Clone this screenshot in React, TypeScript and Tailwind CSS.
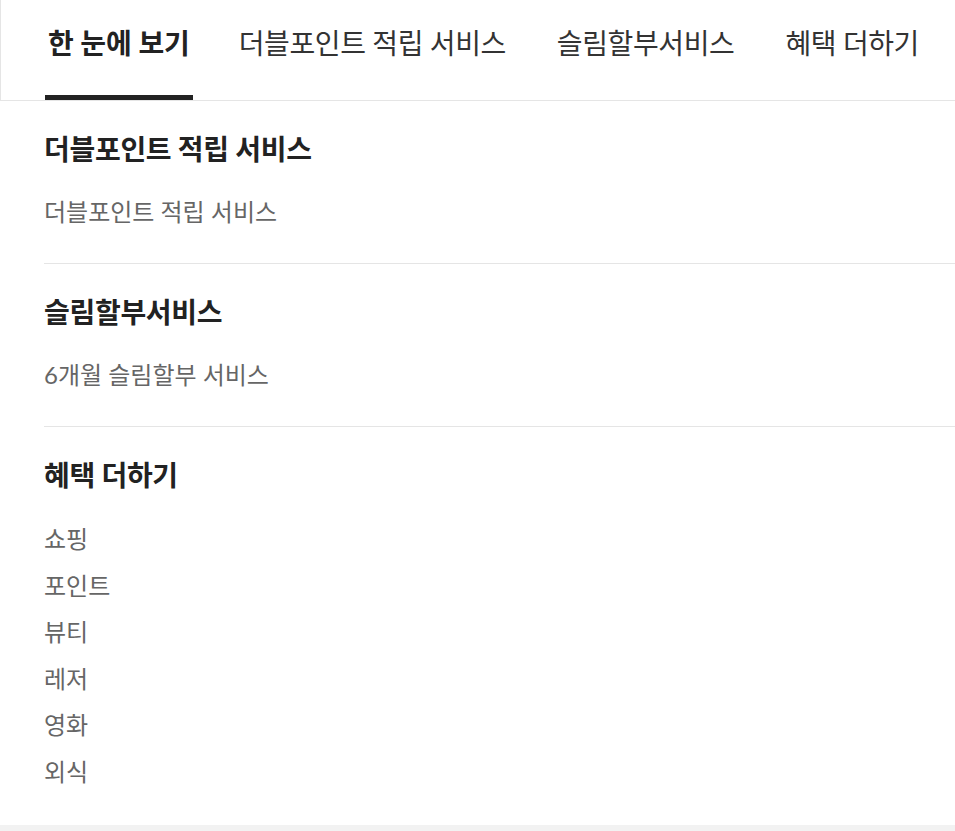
import React from "react";

const font = { fontFamily: 'Lato, "Noto Sans CJK KR", sans-serif' };

const tabs = ["한 눈에 보기", "더블포인트 적립 서비스", "슬림할부서비스", "혜택 더하기"];

export default function App() {
  return (
    <div className="w-full overflow-hidden bg-white" style={font}>
      <nav className="flex h-[101px] items-stretch gap-[45px] border-b border-l border-[#e5e5e5] pl-[44px]">
        {tabs.map((t, i) => (
          <div
            key={t}
            className={
              i === 0
                ? "-mr-[2px] flex shrink-0 items-center whitespace-nowrap border-b-[5px] border-[#222] px-[3px] pb-[9px] text-[28px] font-bold tracking-[-0.1px] text-[#222]"
                : "flex shrink-0 items-center whitespace-nowrap border-b-[5px] border-transparent px-[3px] pb-[9px] text-[28px] tracking-[-0.4px] text-[#333]"
            }
          >
            {t}
          </div>
        ))}
      </nav>
      <div className="pl-[44px]">
        <section className="border-b border-[#e5e5e5] pt-[30px] pb-[35px]">
          <h2 className="text-[28px] font-bold leading-[36px] tracking-[-0.3px] text-[#222]">더블포인트 적립 서비스</h2>
          <p className="mt-[29px] text-[24px] leading-[32px] text-[#666]">더블포인트 적립 서비스</p>
        </section>
        <section className="border-b border-[#e5e5e5] pt-[30px] pb-[35px]">
          <h2 className="text-[28px] font-bold leading-[36px] tracking-[-0.3px] text-[#222]">슬림할부서비스</h2>
          <p className="mt-[29px] text-[24px] leading-[32px] text-[#666]">6개월 슬림할부 서비스</p>
        </section>
        <section className="pt-[30px] pb-[29px]">
          <h2 className="text-[28px] font-bold leading-[36px] tracking-[-0.3px] text-[#222]">혜택 더하기</h2>
          <ul className="mt-[23px] flex flex-col">
            {["쇼핑", "포인트", "뷰티", "레저", "영화", "외식"].map((x) => (
              <li key={x} className="text-[24px] leading-[46.6px] text-[#666]">
                {x}
              </li>
            ))}
          </ul>
        </section>
      </div>
      <div className="h-[40px] bg-[#f2f2f2]" />
    </div>
  );
}
